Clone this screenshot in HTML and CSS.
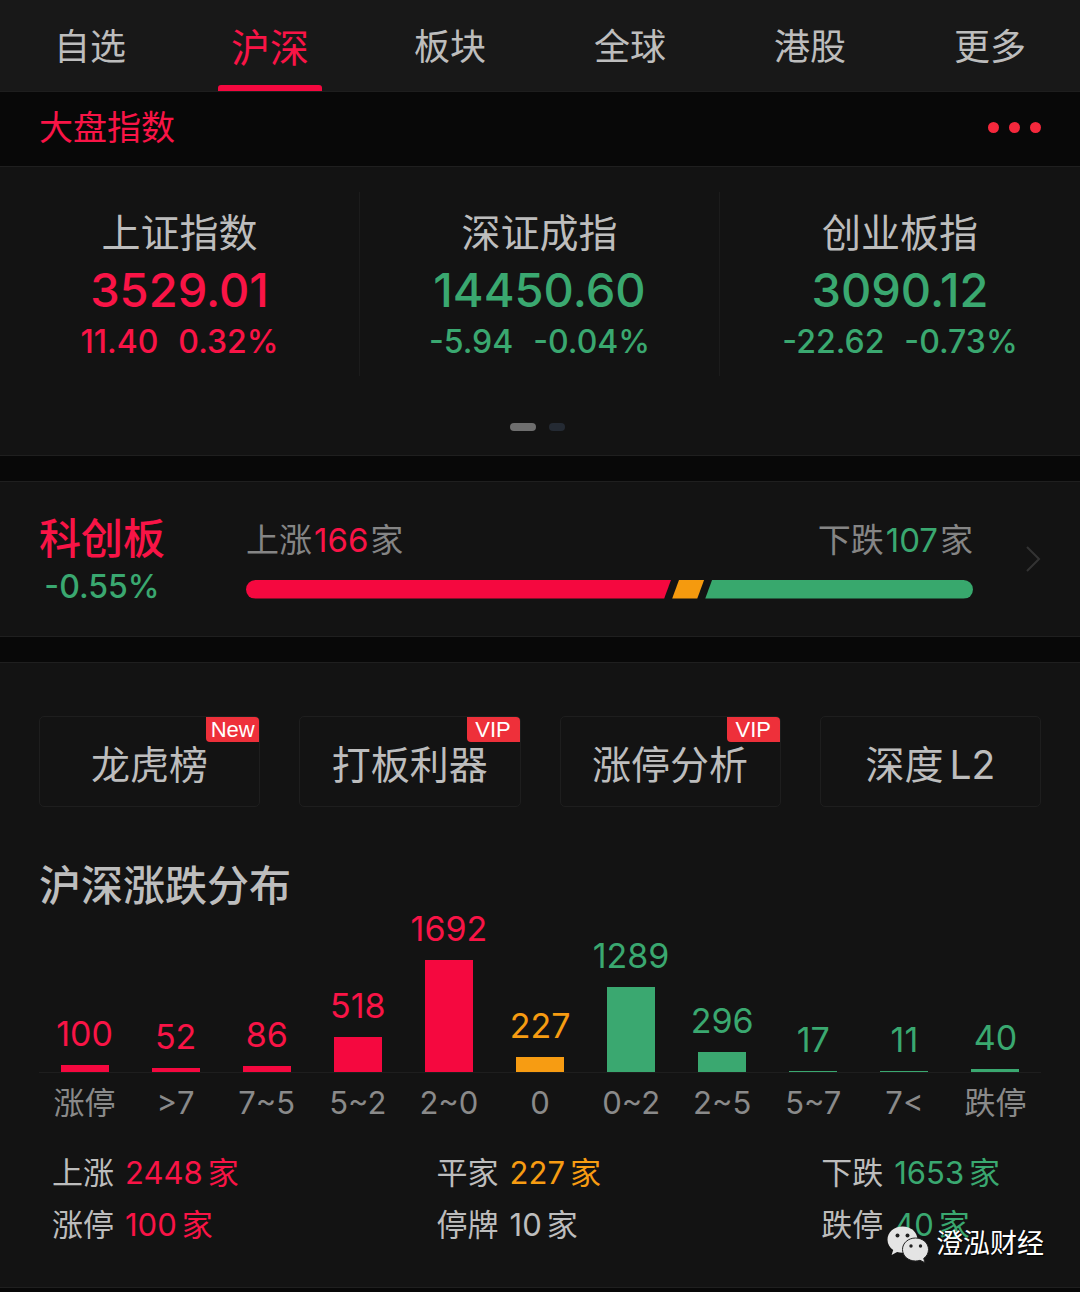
FILE: index.html
```html
<!DOCTYPE html>
<html lang="zh-CN">
<head>
    <meta charset="UTF-8">
    <meta name="viewport" content="width=device-width, initial-scale=1.0">
    <title>沪深行情</title>
    <link rel="stylesheet" href="styles.css">
</head>
<body>
    <nav class="tabs">
        <a href="#">自选</a>
        <a href="#" class="active">沪深</a>
        <a href="#">板块</a>
        <a href="#">全球</a>
        <a href="#">港股</a>
        <a href="#">更多</a>
    </nav>

    <header class="title-bar">
        <h2>大盘指数</h2>
        <button class="more-btn" aria-label="更多指数"><span></span><span></span><span></span></button>
    </header>

    <!-- Index cards -->
    <section class="panel indexes">
        <div class="index-list">
            <a href="#" class="index up">
                <span class="index-name">上证指数</span>
                <strong>3529.01</strong>
                <span class="change"><span>11.40</span><span>0.32%</span></span>
            </a>
            <a href="#" class="index down">
                <span class="index-name">深证成指</span>
                <strong>14450.60</strong>
                <span class="change"><span>-5.94</span><span>-0.04%</span></span>
            </a>
            <a href="#" class="index down">
                <span class="index-name">创业板指</span>
                <strong>3090.12</strong>
                <span class="change"><span>-22.62</span><span>-0.73%</span></span>
            </a>
        </div>
        <div class="pager"><span class="current"></span><span></span></div>
    </section>

    <!-- STAR market -->
    <a href="#" class="panel star">
        <div class="star-name">
            <h3>科创板</h3>
            <span class="down">-0.55%</span>
        </div>
        <div class="star-stats">
            <div class="star-counts">
                <span>上涨<b class="up">166</b>家</span>
                <span>下跌<b class="down">107</b>家</span>
            </div>
            <div class="ratio">
                <span class="ratio-up" style="flex-grow: 424"></span>
                <span class="ratio-flat" style="flex-grow: 32"></span>
                <span class="ratio-down" style="flex-grow: 267"></span>
            </div>
        </div>
        <svg class="chevron" viewBox="0 0 16 28" aria-hidden="true"><path d="M2 2l12 12L2 26"/></svg>
    </a>

    <main class="panel market">
        <div class="tools">
            <button>龙虎榜<span class="badge">New</span></button>
            <button>打板利器<span class="badge">VIP</span></button>
            <button>涨停分析<span class="badge">VIP</span></button>
            <button>深度<span class="level">L2</span></button>
        </div>

        <h2 class="chart-title">沪深涨跌分布</h2>
        <div class="chart">
            <div class="col up"><span>100</span><i style="height: 7px"></i></div>
            <div class="col up"><span>52</span><i style="height: 4px"></i></div>
            <div class="col up"><span>86</span><i style="height: 6px"></i></div>
            <div class="col up"><span>518</span><i style="height: 35px"></i></div>
            <div class="col up"><span>1692</span><i style="height: 112px"></i></div>
            <div class="col flat"><span>227</span><i style="height: 15px"></i></div>
            <div class="col down"><span>1289</span><i style="height: 85px"></i></div>
            <div class="col down"><span>296</span><i style="height: 20px"></i></div>
            <div class="col down"><span>17</span><i style="height: 1px"></i></div>
            <div class="col down"><span>11</span><i style="height: 1px"></i></div>
            <div class="col down"><span>40</span><i style="height: 3px"></i></div>
        </div>
        <div class="axis">
            <span>涨停</span>
            <span>&gt;7</span>
            <span>7~5</span>
            <span>5~2</span>
            <span>2~0</span>
            <span>0</span>
            <span>0~2</span>
            <span>2~5</span>
            <span>5~7</span>
            <span>7&lt;</span>
            <span>跌停</span>
        </div>

        <div class="summary">
            <div>上涨<span class="num up">2448<em>家</em></span></div>
            <div>平家<span class="num flat">227<em>家</em></span></div>
            <div>下跌<span class="num down">1653<em>家</em></span></div>
            <div>涨停<span class="num up">100<em>家</em></span></div>
            <div>停牌<span class="num">10<em>家</em></span></div>
            <div>跌停<span class="num down">40<em>家</em></span></div>
        </div>

        <div class="watermark">
            <svg viewBox="0 0 42 37" aria-hidden="true">
                <path class="bubble" d="M15.500 .5C7 .5 .5 6.300 .5 13.700c0 4.300 2.200 7.900 5.700 10.300L4.600 29l5.500-3c1.700.500 3.500.800 5.400.800 8.500 0 15-5.800 15-13.100S24 .5 15.500 .5z"/>
                <circle cx="10.500" cy="9.500" r="2"/>
                <circle cx="20.500" cy="9.500" r="2"/>
                <path class="bubble front" d="M28.500 12C21.300 12 15.500 17 15.500 23.500S21.300 35 28.500 35c1.600 0 3.100-.300 4.500-.700l5 2.400-1.300-4.300c3-2.100 4.800-5.300 4.800-8.900C41.500 17 35.700 12 28.500 12z"/>
                <circle cx="24" cy="20" r="1.700"/>
                <circle cx="33.500" cy="20" r="1.700"/>
            </svg>
            <span>澄泓财经</span>
        </div>
    </main>
</body>
</html>
```
FILE: styles.css
```css
* {
    box-sizing: border-box;
}

body {
    margin: 0;
    background-color: #080808;
    color: #bdbdbd;
    font-family: Inter, "Noto Sans CJK SC", sans-serif;
    font-size: 32px;
}

a {
    color: inherit;
    text-decoration: none;
}

h2, h3 {
    margin: 0;
}

button {
    font-family: inherit;
    color: inherit;
    background: none;
    border: none;
    padding: 0;
    cursor: pointer;
}

.up {
    color: #f91446;
}
.down {
    color: #3aa870;
}
.flat {
    color: #f79c12;
}

/* Top tabs */
.tabs {
    display: grid;
    grid-template-columns: repeat(6, 1fr);
    height: 92px;
    background-color: #181818;
    border-bottom: 1px solid #1e1e1e;
}
.tabs a {
    display: flex;
    flex-direction: column;
    align-items: center;
    font-size: 36px;
    line-height: 95px;
}
.tabs .active {
    color: #f91446;
    font-size: 39px;
}
.tabs .active::after {
    content: "";
    width: 104px;
    height: 6px;
    margin-top: -10px;
    border-radius: 3px 3px 0 0;
    background-color: #f5083f;
}

.title-bar {
    display: flex;
    justify-content: space-between;
    align-items: center;
    height: 74px;
    padding: 0 39px 3px;
}
.title-bar h2 {
    color: #f91446;
    font-size: 34px;
    font-weight: 400;
    line-height: 48px;
}
.more-btn {
    display: flex;
    gap: 10px;
}
.more-btn span {
    width: 11px;
    height: 11px;
    border-radius: 50%;
    background-color: #f5283c;
}

.panel {
    background-color: #131313;
    border-top: 1px solid #1f1f1f;
    border-bottom: 1px solid #1f1f1f;
}

/* Index cards */
.indexes {
    padding: 25px 0 24px;
}
.index-list {
    display: grid;
    grid-template-columns: repeat(3, 1fr);
}
.index {
    display: flex;
    flex-direction: column;
    align-items: center;
    height: 184px;
    padding-top: 12px;
    border-right: 1px solid #1c1c1c;
}
.index:last-child {
    border-right: none;
}
.index-name {
    color: #bdbdbd;
    font-size: 39px;
    line-height: 58px;
}
.index strong {
    font-size: 47px;
    font-weight: 500;
    line-height: 56px;
}
.change {
    display: flex;
    gap: 20px;
    font-size: 32px;
    font-weight: 500;
    line-height: 48px;
}
.pager {
    display: flex;
    justify-content: center;
    gap: 13px;
    margin-top: 47px;
    padding-right: 6px;
}
.pager span {
    width: 16px;
    height: 8px;
    border-radius: 4px;
    background-color: #242a33;
}
.pager .current {
    width: 26px;
    background-color: #6e6e6e;
}

/* STAR market */
.star {
    display: flex;
    align-items: center;
    height: 156px;
    margin: 25px 0;
    padding: 0 39px;
}
.star-name {
    width: 126px;
    padding-top: 4px;
    text-align: center;
}
.star-name h3 {
    color: #f91446;
    font-size: 42px;
    font-weight: 500;
    line-height: 52px;
}
.star-name span {
    display: block;
    font-size: 32px;
    font-weight: 500;
    line-height: 44px;
}
.star-stats {
    flex: 1;
    margin: 0 52px 0 81px;
    padding-bottom: 4px;
}
.star-counts {
    display: flex;
    justify-content: space-between;
    color: #858585;
    font-size: 33px;
    line-height: 48px;
}
.star-counts b {
    margin: 0 2px;
    font-weight: 400;
}
.ratio {
    display: flex;
    gap: 1px;
    height: 19px;
    margin-top: 16px;
    border-radius: 10px;
    overflow: hidden;
}
.ratio-up {
    background-color: #f5083f;
    clip-path: polygon(0 0, 100% 0, calc(100% - 7px) 100%, 0 100%);
}
.ratio-flat {
    background-color: #f59a0e;
    clip-path: polygon(7px 0, 100% 0, calc(100% - 7px) 100%, 0 100%);
}
.ratio-down {
    background-color: #38a86d;
    clip-path: polygon(7px 0, 100% 0, 100% 100%, 0 100%);
}
.chevron {
    width: 16px;
    height: 28px;
    fill: none;
    stroke: #333;
    stroke-width: 2;
}

/* Market section */
.market {
    position: relative;
    padding: 53px 39px 36px;
}
.tools {
    display: grid;
    grid-template-columns: repeat(4, 1fr);
    gap: 39px;
}
.tools button {
    position: relative;
    height: 91px;
    border: 1px solid #1e1e1e;
    border-radius: 5px;
    font-size: 39px;
}
.level {
    margin-left: 6px;
}
.badge {
    position: absolute;
    top: 0;
    right: 0;
    width: 53px;
    border-radius: 0 4px 0 4px;
    background-color: #ee303a;
    color: #fff;
    font-family: "Liberation Sans", Arial, sans-serif;
    font-size: 22px;
    line-height: 25px;
}
.chart-title {
    margin-top: 48px;
    font-size: 42px;
    font-weight: 500;
    line-height: 62px;
}

/* Distribution chart */
.chart {
    display: flex;
    align-items: flex-end;
    height: 156px;
    border-bottom: 1px solid #1e1e1e;
}
.col {
    flex: 1;
    display: flex;
    flex-direction: column;
    align-items: center;
    font-size: 34px;
    line-height: 42px;
}
.col i {
    width: 48px;
    margin-top: 10px;
    background-color: currentColor;
}
.col.up i {
    background-color: #f5083f;
}
.axis {
    display: flex;
    color: #8a8a8a;
    font-size: 31px;
    line-height: 60px;
}
.axis span {
    flex: 1;
    text-align: center;
}

.summary {
    display: grid;
    grid-template-columns: 7fr 7fr 4fr;
    margin-top: 14px;
    padding-left: 13px;
    font-size: 31px;
    line-height: 52px;
    white-space: nowrap;
}
.summary .num {
    margin-left: 11px;
}
.summary em {
    margin-left: 5px;
    font-style: normal;
}

.watermark {
    position: absolute;
    right: 36px;
    bottom: 23px;
    display: flex;
    align-items: center;
    gap: 7px;
    color: #fff;
    font-size: 27px;
    line-height: 40px;
    text-shadow: 1px 1px 1px #000;
}
.watermark svg {
    width: 42px;
    height: 37px;
    fill: #222;
}
.watermark .bubble {
    fill: #e4e4e4;
}
.watermark .front {
    stroke: #222;
    stroke-width: 1;
}
```
